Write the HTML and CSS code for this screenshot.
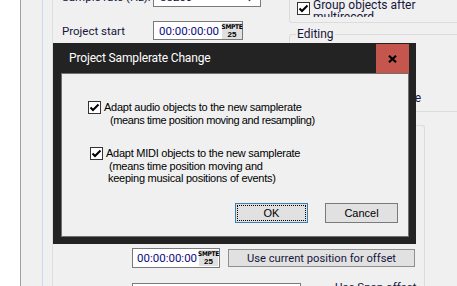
FILE: index.html
```html
<!DOCTYPE html>
<html lang="en">
<head>
  <meta charset="UTF-8" />
  <meta name="viewport" content="width=device-width, initial-scale=1.0"/>
  <title>Project Samplerate Change</title>
  <link rel="stylesheet" href="styles.css">
</head>
<body>
  <div class="app">
    <div class="gutter"></div>
    <div class="rail"></div>
    <div class="rail2"></div>

    <div class="main">
      <div class="upper">
        <div class="general">
          <div class="row row-rate">
            <label class="lbl">Sample rate (Hz):</label>
            <div class="combo">
              <span>88200</span>
              <svg class="combo-arrow" width="7" height="5" viewBox="0 0 7 5"><path d="M0.5 0.5 3.5 3.5 6.5 0.5" fill="none" stroke="#333" stroke-width="1.2"/></svg>
            </div>
          </div>
          <div class="row row-start">
            <label class="lbl">Project start</label>
            <div class="tc">
              <span class="tc-val">00:00:00:00</span>
              <span class="smpte"><span class="smpte-t">SMPTE</span><span class="smpte-n">25</span></span>
            </div>
          </div>
        </div>

        <div class="right">
          <div class="grp-rec">
            <div class="grp-clip">
              <div class="chk-row">
                <svg class="chk" width="13" height="13" viewBox="0 0 13 13"><rect x="0.5" y="0.5" width="12" height="12" fill="#fff" stroke="#333"/><path d="M2.5 6.5 5 9 10.5 3.5" fill="none" stroke="#000" stroke-width="2"/></svg>
                <span class="chk-text">Group objects after<br>multirecord</span>
              </div>
            </div>
          </div>
          <fieldset class="grp-edit">
            <legend>Editing</legend>
            <div class="edit-row">Snap to object edge</div>
          </fieldset>
        </div>
      </div>

      <div class="offset">
        <div class="offset-row">
          <div class="tc tc-low">
            <span class="tc-val">00:00:00:00</span>
            <span class="smpte"><span class="smpte-t">SMPTE</span><span class="smpte-n">25</span></span>
          </div>
          <button class="btn-wide" type="button">Use current position for offset</button>
        </div>
        <div class="snap-row">
          <div class="field"></div>
          <span class="snap-lbl">Use Snap offset</span>
        </div>
      </div>

      <!-- modal dialog on top of the settings page -->
      <div class="dlg">
        <div class="dlg-bar">
          <span class="dlg-title">Project Samplerate Change</span>
          <span class="dlg-close">
            <svg width="9" height="8" viewBox="0 0 9 8"><path d="M1 0.8 8 7.2 M8 0.8 1 7.2" fill="none" stroke="#000" stroke-width="2.2"/></svg>
          </span>
        </div>
        <div class="dlg-body">
          <div class="opt opt-audio">
            <svg class="chk" width="13" height="13" viewBox="0 0 13 13"><rect x="0.5" y="0.5" width="12" height="12" fill="#fff" stroke="#333"/><path d="M2.5 6.5 5 9 10.5 3.5" fill="none" stroke="#000" stroke-width="2"/></svg>
            <div class="opt-text">
              <span class="ln">Adapt audio objects to the new samplerate</span>
              <span class="ln sub">(means time position moving and resampling)</span>
            </div>
          </div>
          <div class="opt opt-midi">
            <svg class="chk" width="13" height="13" viewBox="0 0 13 13"><rect x="0.5" y="0.5" width="12" height="12" fill="#fff" stroke="#333"/><path d="M2.5 6.5 5 9 10.5 3.5" fill="none" stroke="#000" stroke-width="2"/></svg>
            <div class="opt-text">
              <span class="ln">Adapt MIDI objects to the new samplerate</span>
              <span class="ln sub3">(means time position moving and</span>
              <span class="ln sub2">keeping musical positions of events)</span>
            </div>
          </div>
          <div class="dlg-buttons">
            <button class="btn btn-default" type="button"><span class="focus">OK</span></button>
            <button class="btn" type="button">Cancel</button>
          </div>
        </div>
      </div>
    </div>
  </div>
</body>
</html>
```

FILE: styles.css
```css
* {
  box-sizing: border-box;
}
body {
  margin: 0;
  width: 457px;
  height: 286px;
  overflow: hidden;
  background: #f0f0f0;
  font-family: Roboto, "Liberation Sans", sans-serif;
  font-size: 11.5px;
  color: #16163c;
}
.app {
  display: flex;
  height: 286px;
}
.gutter {
  width: 21px;
  background: #fff;
  border-right: 1px solid #a0a0a0;
}
.rail {
  width: 22px;
  border-right: 1px solid #c9dcee;
}
.rail2 {
  width: 10px;
  border-right: 1px solid #dedede;
}
.main {
  flex: 1;
  position: relative;
  display: flex;
  flex-direction: column;
  overflow: hidden;
}

/* settings page behind the dialog */
.upper {
  display: flex;
  flex: none;
  height: 112px;
}
.general {
  width: 236px;
  padding-left: 9px;
}
.row {
  display: flex;
  align-items: center;
}
.row-rate {
  margin-top: -13px;
  height: 20px;
}
.row-start {
  margin-top: 14px;
}
.lbl {
  width: 91px;
  white-space: nowrap;
}
.combo {
  width: 108px;
  height: 20px;
  display: flex;
  align-items: center;
  background: #fff;
  border: 1px solid #7a7a7a;
  padding-left: 6px;
}
.combo-arrow {
  margin-left: auto;
  margin-right: 7px;
  align-self: flex-end;
  margin-bottom: 4px;
}
.tc {
  width: 90px;
  height: 19px;
  display: flex;
  align-items: center;
  background: #fff;
  border: 1px solid #7a7a7a;
  padding-left: 5px;
}
.tc-val {
  font-size: 11.5px;
  color: #0c0c82;
}
.smpte {
  margin-left: auto;
  width: 20px;
  height: 16px;
  background: #e0e0e0;
  color: #000;
  display: flex;
  flex-direction: column;
  align-items: center;
  justify-content: center;
  font-weight: bold;
}
.smpte-t {
  font-family: "DejaVu Sans Condensed", "Liberation Sans Narrow", sans-serif;
  font-size: 6.5px;
  letter-spacing: -0.3px;
  line-height: 7px;
}
.smpte-n {
  font-family: "Liberation Sans", sans-serif;
  font-size: 8px;
  line-height: 7px;
}

.right {
  flex: 1;
  display: flex;
  flex-direction: column;
}
.grp-rec {
  height: 23px;
  border-left: 1px solid #dcdcdc;
  border-bottom: 1px solid #dcdcdc;
  border-bottom-left-radius: 3px;
  padding-left: 7px;
}
.grp-clip {
  height: 17px;
  overflow: hidden;
}
.chk-row {
  display: flex;
  align-items: flex-start;
  margin-top: -1px;
}
.chk-row .chk {
  margin-top: 3px;
}
.chk-text {
  margin-left: 3px;
  line-height: 12px;
  font-size: 12px;
}
.chk {
  flex: none;
}
.grp-edit {
  margin: 4px 0 0;
  padding: 0 0 0 6px;
  height: 85px;
  min-width: 0;
  border: 1px solid #dcdcdc;
  border-right: 0;
  border-radius: 3px 0 0 3px;
}
.grp-edit legend {
  padding: 0 1px;
  line-height: 14px;
  font-size: 12px;
}
.edit-row {
  width: 125px;
  text-align: right;
  margin-top: 50px;
  white-space: nowrap;
  font-size: 12px;
}

.offset {
  flex: none;
  height: 200px;
  margin-top: 13px;
  margin-right: 32px;
  border-top: 1px solid #dcdcdc;
  border-right: 1px solid #dcdcdc;
  border-top-right-radius: 3px;
}
.offset-row {
  display: flex;
  align-items: center;
  margin-top: 122px;
  padding-left: 79px;
}
.tc-low {
  width: 88px;
  height: 20px;
  padding-left: 4px;
}
.tc-low .smpte {
  width: 19px;
  margin-right: 1px;
}
.btn-wide {
  margin-left: 8px;
  width: 187px;
  height: 18px;
  padding: 0;
  background: #e1e1e1;
  border: 1px solid #8f8f8f;
  font: inherit;
  font-size: 11.2px;
  color: inherit;
}
.snap-row {
  display: flex;
  margin-top: 15px;
  padding-left: 79px;
}
.field {
  width: 169px;
  height: 20px;
  background: #fff;
  border: 1px solid #7a7a7a;
}
.snap-lbl {
  margin-left: 34px;
  margin-top: -3px;
  line-height: 14px;
}

/* dialog */
.dlg {
  position: absolute;
  left: 0;
  top: 43px;
  width: 363px;
  height: 201px;
  background: #232323;
  padding: 0 7px 7px 8px;
  display: flex;
  flex-direction: column;
}
.dlg-bar {
  height: 30px;
  display: flex;
  align-items: center;
}
.dlg-title {
  flex: 1;
  padding-left: 8px;
  color: #fff;
  font-size: 12px;
  letter-spacing: -0.15px;
}
.dlg-close {
  align-self: flex-end;
  width: 33px;
  height: 29px;
  background: #c4564e;
  display: flex;
  align-items: center;
  justify-content: center;
}
.dlg-body {
  flex: 1;
  background: #f0f0f0;
  border: 1px solid #707070;
  padding: 27px 10px 0 26px;
  display: flex;
  flex-direction: column;
  font-family: "Liberation Sans", Arial, sans-serif;
  font-size: 11px;
  letter-spacing: -0.25px;
  color: #000;
}
.opt {
  display: flex;
  align-items: flex-start;
}
.opt-text {
  margin-left: 3px;
  display: flex;
  flex-direction: column;
}
.opt-audio .ln {
  line-height: 13px;
}
.opt-audio .sub {
  letter-spacing: -0.4px;
}
.opt-midi {
  margin-top: 20px;
  margin-left: 2px;
}
.opt-midi .ln {
  line-height: 12.5px;
}
.sub {
  padding-left: 6px;
}
.sub3 {
  padding-left: 3px;
}
.sub2 {
  padding-left: 2px;
}
.dlg-buttons {
  display: flex;
  justify-content: flex-end;
  gap: 17px;
  margin-top: 18.5px;
}
.btn {
  width: 73px;
  height: 20px;
  padding: 0;
  background: #e1e1e1;
  border: 1px solid #7a7a7a;
  font: inherit;
  color: #000;
  display: flex;
  align-items: center;
  justify-content: center;
}
.btn-default {
  border-color: #3c7fb1;
  padding: 1px;
}
.focus {
  flex: 1;
  align-self: stretch;
  border: 1px dotted #000;
  display: flex;
  align-items: center;
  justify-content: center;
}
```
